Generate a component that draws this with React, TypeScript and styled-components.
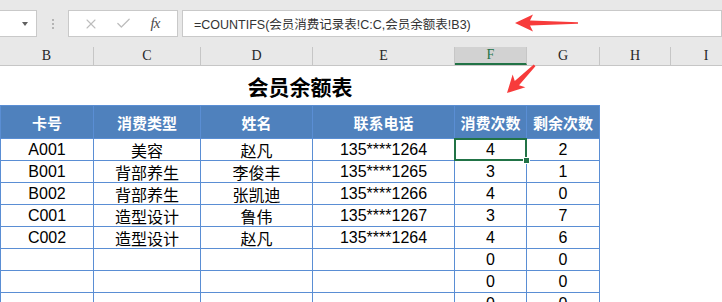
import { createGlobalStyle, styled } from 'styled-components';
import { X, Check } from 'lucide-react';

const GlobalStyle = createGlobalStyle`
	html, body {
		margin: 0;
		background: #ffffff;
		overflow: hidden;
	}
`;

const columns = [
	{ name: 'B', width: 94 },
	{ name: 'C', width: 107 },
	{ name: 'D', width: 112 },
	{ name: 'E', width: 142 },
	{ name: 'F', width: 72 },
	{ name: 'G', width: 73 },
	{ name: 'H', width: 71 },
	{ name: 'I', width: 71 }
];

const headers = ['卡号', '消费类型', '姓名', '联系电话', '消费次数', '剩余次数'];

const rows: string[][] = [
	['A001', '美容', '赵凡', '135****1264', '4', '2'],
	['B001', '背部养生', '李俊丰', '135****1265', '3', '1'],
	['B002', '背部养生', '张凯迪', '135****1266', '4', '0'],
	['C001', '造型设计', '鲁伟', '135****1267', '3', '7'],
	['C002', '造型设计', '赵凡', '135****1264', '4', '6'],
	['', '', '', '', '0', '0'],
	['', '', '', '', '0', '0'],
	['', '', '', '', '0', '0']
];

const Page = styled.div`
	position: relative;
	width: 722px;
	height: 302px;
	overflow: hidden;
	background: #ffffff;
	font-family: 'Liberation Sans', 'Noto Sans CJK SC', sans-serif;
`;

const FormulaBar = styled.div`
	display: flex;
	align-items: flex-start;
	height: 47px;
	padding-top: 10px;
	box-sizing: border-box;
	background: #e8e8e8;
`;

const BarBox = styled.div<{ $width?: number }>`
	display: flex;
	align-items: center;
	height: 27px;
	box-sizing: border-box;
	background: #ffffff;
	border: 1px solid #c9c9c9;
	${(p) => (p.$width ? `width: ${p.$width}px;` : 'flex: 1;')}
`;

const NameBox = styled(BarBox)`
	justify-content: flex-end;
	border-left: none;
	padding-right: 8px;
`;

const Caret = styled.span`
	width: 0;
	height: 0;
	border-left: 3.5px solid transparent;
	border-right: 3.5px solid transparent;
	border-top: 4px solid #606060;
`;

const Grip = styled.div`
	display: flex;
	flex-direction: column;
	align-items: center;
	justify-content: center;
	gap: 2px;
	width: 31px;
	height: 27px;
`;

const GripDot = styled.span`
	width: 2px;
	height: 2px;
	background: #b4b4b4;
`;

const ButtonBox = styled(BarBox)`
	justify-content: space-around;
	padding: 0 6px;
	margin-right: 4px;
`;

const IconButton = styled.span<{ $dim?: boolean }>`
	display: flex;
	align-items: center;
	justify-content: center;
	width: 24px;
	color: ${(p) => (p.$dim ? '#bdbdbd' : '#505050')};
`;

const Fx = styled.span`
	font-family: 'Liberation Serif', serif;
	font-style: italic;
	font-size: 15px;
	color: #4a4a4a;
	letter-spacing: -1px;
`;

const FormulaText = styled.span`
	padding-left: 11px;
	font-size: 12.5px;
	color: #333333;
	white-space: nowrap;
`;

const ColumnHeaders = styled.div`
	display: flex;
	height: 18px;
	background: #e8e8e8;
	border-bottom: 1px solid #c6c6c6;
`;

const ColumnHead = styled.div<{ $width: number; $active?: boolean }>`
	flex: 0 0 ${(p) => p.$width}px;
	display: flex;
	align-items: center;
	justify-content: center;
	box-sizing: border-box;
	border-right: 1px solid #c6c6c6;
	font-family: 'Liberation Serif', serif;
	font-size: 14px;
	color: ${(p) => (p.$active ? '#217346' : '#262626')};
	background: ${(p) => (p.$active ? '#d2d2d2' : 'transparent')};
	border-bottom: ${(p) => (p.$active ? '2px solid #217346' : 'none')};
`;

const Title = styled.div`
	width: 600px;
	height: 39px;
	display: flex;
	align-items: center;
	justify-content: center;
	font-family: 'Noto Sans CJK SC', sans-serif;
	font-weight: 700;
	font-size: 21px;
	color: #000000;
`;

const Table = styled.div`
	display: grid;
	grid-template-columns: 92px 106px 111px 141px 71px 72px;
	grid-template-rows: 32px;
	grid-auto-rows: 21px;
	gap: 1px;
	padding: 1px;
	width: fit-content;
	background: #5a8ed4;
`;

const HeadCell = styled.div`
	display: flex;
	align-items: center;
	justify-content: center;
	background: #4f81bd;
	color: #ffffff;
	font-family: 'Noto Sans CJK SC', sans-serif;
	font-weight: 700;
	font-size: 15px;
`;

const Cell = styled.div<{ $selected?: boolean }>`
	position: relative;
	display: flex;
	align-items: center;
	justify-content: center;
	background: #ffffff;
	font-size: 16px;
	color: #000000;

	${(p) =>
		p.$selected &&
		`
		&::before {
			content: '';
			position: absolute;
			inset: -1px;
			border: 2px solid #217346;
			z-index: 1;
		}
		&::after {
			content: '';
			position: absolute;
			right: -4px;
			bottom: -4px;
			width: 5px;
			height: 5px;
			background: #217346;
			border: 1px solid #ffffff;
			z-index: 2;
		}
	`}
`;

const Arrows = styled.svg`
	position: absolute;
	left: 0;
	top: 0;
	pointer-events: none;
`;

export default function App() {
	return (
		<Page>
			<GlobalStyle />
			<FormulaBar>
				<NameBox $width={37}>
					<Caret />
				</NameBox>
				<Grip>
					<GripDot />
					<GripDot />
					<GripDot />
				</Grip>
				<ButtonBox $width={110}>
					<IconButton $dim>
						<X size={16} strokeWidth={1.6} />
					</IconButton>
					<IconButton $dim>
						<Check size={17} strokeWidth={1.8} />
					</IconButton>
					<IconButton>
						<Fx>fx</Fx>
					</IconButton>
				</ButtonBox>
				<BarBox>
					<FormulaText>=COUNTIFS(会员消费记录表!C:C,会员余额表!B3)</FormulaText>
				</BarBox>
			</FormulaBar>
			<ColumnHeaders>
				{columns.map((c) => (
					<ColumnHead key={c.name} $width={c.width} $active={c.name === 'F'}>
						{c.name}
					</ColumnHead>
				))}
			</ColumnHeaders>
			<Title>会员余额表</Title>
			<Table>
				{headers.map((h) => (
					<HeadCell key={h}>{h}</HeadCell>
				))}
				{rows.map((r, i) =>
					r.map((v, j) => (
						<Cell key={`${i}-${j}`} $selected={i === 0 && j === 4}>
							{v}
						</Cell>
					))
				)}
			</Table>
			<Arrows width="722" height="302">
				<polygon
					transform="translate(515 23)"
					points="0,0 18,-8.5 15,-2.5 63,-0.8 63,0.8 15,2.5 18,8.5"
					fill="#f73b3b"
				/>
				<polygon
					transform="translate(507 93) rotate(-45)"
					points="0,0 17,-9 14,-3 39,-1.2 39,1.2 14,3 17,9"
					fill="#f73b3b"
				/>
			</Arrows>
		</Page>
	);
}
